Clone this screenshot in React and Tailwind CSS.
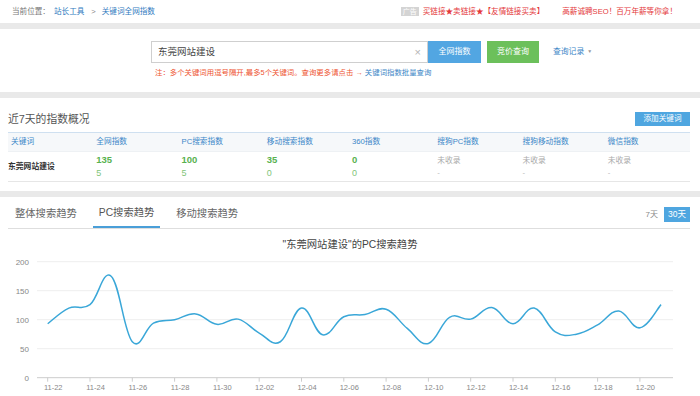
import React from "react";

const data = [93, 120, 126, 175, 62, 94, 100, 110, 92, 101, 77, 62, 120, 74, 105, 109, 118, 85, 59, 104, 101, 121, 93, 120, 79, 75, 91, 115, 86, 126];
const xLabels = ["11-22", "11-24", "11-26", "11-28", "11-30", "12-02", "12-04", "12-06", "12-08", "12-10", "12-12", "12-14", "12-16", "12-18", "12-20"];

const toX = (i) => 47.7 + 21.15 * i;
const toY = (v) => 126.7 - v * 0.58;

const buildPath = (vals) => {
  const pts = vals.map((v, i) => [toX(i), toY(v)]);
  let d = `M${pts[0][0]},${pts[0][1]}`;
  for (let i = 0; i < pts.length - 1; i++) {
    const p0 = pts[i - 1] || pts[i];
    const p1 = pts[i];
    const p2 = pts[i + 1];
    const p3 = pts[i + 2] || p2;
    const k = 0.2;
    const c1 = [p1[0] + (p2[0] - p0[0]) * k, p1[1] + (p2[1] - p0[1]) * k];
    const c2 = [p2[0] - (p3[0] - p1[0]) * k, p2[1] - (p3[1] - p1[1]) * k];
    d += ` C${c1[0]},${c1[1]} ${c2[0]},${c2[1]} ${p2[0]},${p2[1]}`;
  }
  return d;
};

const columns = [
  { head: "关键词" },
  { head: "全网指数", top: "135", bottom: "5", green: true },
  { head: "PC搜索指数", top: "100", bottom: "5", green: true },
  { head: "移动搜索指数", top: "35", bottom: "0", green: true },
  { head: "360指数", top: "0", bottom: "0", green: true },
  { head: "搜狗PC指数", top: "未收录", bottom: "-" },
  { head: "搜狗移动指数", top: "未收录", bottom: "-" },
  { head: "微信指数", top: "未收录", bottom: "-" },
];

const TrendChart = () => (
  <svg width="700" height="150" viewBox="0 0 700 150" className="block">
    {/* grid */}
    {[200, 150, 100, 50].map((v) => (
      <line key={v} x1="37" x2="673" y1={toY(v)} y2={toY(v)} stroke="#eeeeee" strokeWidth="1" />
    ))}
    <line x1="37" x2="673" y1={toY(0)} y2={toY(0)} stroke="#cccccc" strokeWidth="1" />
    {[200, 150, 100, 50, 0].map((v) => (
      <text key={v} x="29" y={toY(v) + 3} textAnchor="end" fontSize="8" fill="#888">
        {v}
      </text>
    ))}
    {xLabels.map((l, k) => {
      const x = toX(k * 2);
      return (
        <g key={l}>
          <line x1={x} x2={x} y1={toY(0)} y2={toY(0) + 4} stroke="#cccccc" />
          <text x={x + 5.5} y="139" textAnchor="middle" fontSize="7.5" fill="#888">
            {l}
          </text>
        </g>
      );
    })}
    <path d={buildPath(data)} fill="none" stroke="#3aa7d8" strokeWidth="1.5" />
  </svg>
);

export default function App() {
  return (
    <div className="w-[700px] h-[396px] overflow-hidden bg-[#e9e9e9] flex flex-col gap-[6px] [font-family:'Liberation_Sans','Noto_Sans_CJK_SC',sans-serif]">
      {/* breadcrumb bar */}
      <div className="h-[23px] shrink-0 bg-white flex items-center justify-between pl-[12px] pr-[23px] text-[7.6px] leading-none">
        <div className="flex items-center">
          <span className="text-[#777]">当前位置：</span>
          <span className="ml-[4px] text-[#2f7bc0]">站长工具</span>
          <span className="ml-[7px] text-[#888]">&gt;</span>
          <span className="ml-[6px] text-[#2f7bc0]">关键词全网指数</span>
        </div>
        <div className="flex items-center">
          <span className="bg-[#d4d4d4] text-white px-[2px] py-[1px] text-[7px]">广告</span>
          <span className="ml-[4px] text-[#e4393c]">买链接★卖链接★【友情链接买卖】</span>
          <span className="ml-[18px] text-[#e4393c]">高薪诚聘SEO！百万年薪等你拿！</span>
        </div>
      </div>

      {/* search */}
      <div className="h-[63px] shrink-0 bg-white pl-[151px] pt-[12px]">
        <div className="flex items-center h-[22px]">
          <div className="w-[277px] h-[22px] border border-[#cfcfcf] flex items-center justify-between pl-[6px] pr-[6px]">
            <span className="text-[9.5px] leading-none text-[#444]">东莞网站建设</span>
            <span className="text-[11px] leading-none text-[#b5b5b5]">×</span>
          </div>
          <div className="w-[53px] h-[22px] bg-[#52a6e2] text-white text-[8px] leading-none flex items-center justify-center">全网指数</div>
          <div className="ml-[6px] w-[52px] h-[22px] bg-[#6cc05b] text-white text-[8px] leading-none flex items-center justify-center">竞价查询</div>
          <div className="ml-[14px] text-[7.8px] leading-none text-[#3a85c6] flex items-center">
            查询记录
            <span className="ml-[3px] text-[5px] text-[#999]">▼</span>
          </div>
        </div>
        <div className="mt-[6px] ml-[4px] text-[7.4px] leading-none text-[#ee5330]">
          注：多个关键词用逗号隔开,最多5个关键词。查询更多请点击 →{" "}
          <span className="text-[#3a85c6]">关键词指数批量查询</span>
        </div>
      </div>

      {/* 7-day overview */}
      <div className="h-[93px] shrink-0 bg-white px-[8px] pr-[10px] pt-[14px]">
        <div className="flex items-center justify-between h-[14px]">
          <span className="text-[10.8px] leading-none text-[#555]">近7天的指数概况</span>
          <span className="w-[55px] h-[14px] bg-[#4fa6e0] text-white text-[7.6px] leading-none flex items-center justify-center">添加关键词</span>
        </div>
        <div className="mt-[6px]">
          <div className="grid grid-cols-8 h-[19px] items-center bg-[#f6f8fa] border-t border-[#cfe0f0] text-[7.7px] leading-none text-[#3b87c8]">
            {columns.map((c) => (
              <span key={c.head} className="pl-[3px]">{c.head}</span>
            ))}
          </div>
          <div className="grid grid-cols-8 h-[31px] items-center border-b border-[#e6e6e6] border-t border-t-[#eef1f4]">
            {columns.map((c, i) =>
              i === 0 ? (
                <span key={c.head} className="text-[7.8px] font-bold leading-none text-[#333]">东莞网站建设</span>
              ) : (
                <div key={c.head} className="pl-[3px] flex flex-col gap-[4px]">
                  <span className={c.green ? "text-[9.5px] font-bold leading-none text-[#58b24f]" : "text-[7.8px] leading-none text-[#aaa]"}>
                    {c.top}
                  </span>
                  <span className={c.green ? "text-[9px] leading-none text-[#82c57a]" : "text-[7.8px] leading-none text-[#bbb]"}>
                    {c.bottom}
                  </span>
                </div>
              )
            )}
          </div>
        </div>
      </div>

      {/* trend */}
      <div className="flex-1 bg-white">
        <div className="ml-[8px] mr-[10px] h-[32px] border-b border-[#dedede] flex items-stretch justify-between">
          <div className="flex items-stretch gap-[10px] pl-[1px] pt-[4px]">
            <span className="px-[6px] flex items-center text-[10.3px] leading-none text-[#666]">整体搜索趋势</span>
            <span className="px-[6px] flex items-center text-[10.3px] leading-none text-[#555] border-b-2 border-[#4a9fd8]">PC搜索趋势</span>
            <span className="px-[6px] flex items-center text-[10.3px] leading-none text-[#666]">移动搜索趋势</span>
          </div>
          <div className="flex items-center pt-[4px]">
            <span className="text-[8px] leading-none text-[#888]">7天</span>
            <span className="ml-[6px] w-[26px] h-[15px] bg-[#4fa6e0] text-white text-[8.5px] leading-none flex items-center justify-center">30天</span>
          </div>
        </div>
        <div className="mt-[10px] h-[12px] text-center text-[10.3px] leading-[12px] text-[#444]">"东莞网站建设"的PC搜索趋势</div>
        <TrendChart />
      </div>
    </div>
  );
}
